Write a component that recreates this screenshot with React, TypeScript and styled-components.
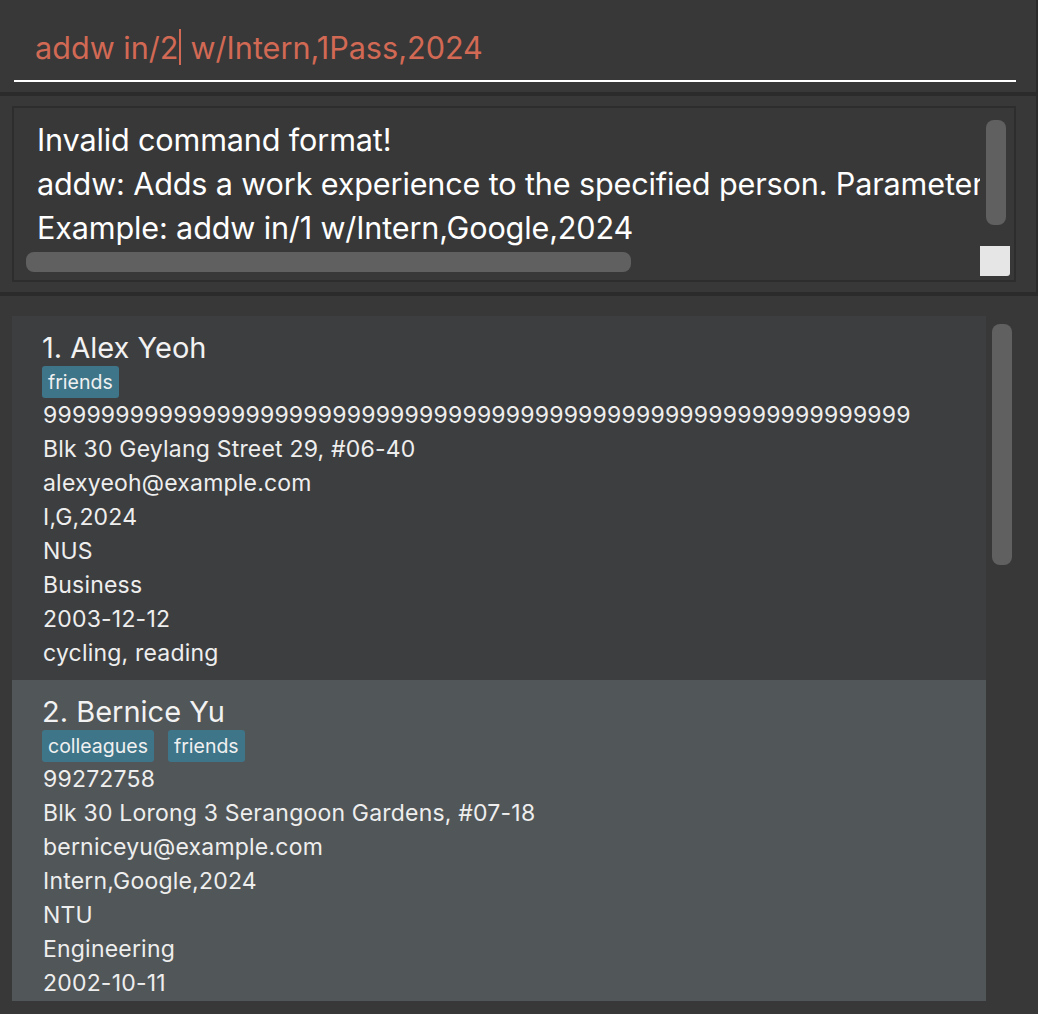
import styled, { createGlobalStyle } from "styled-components";

const GlobalStyle = createGlobalStyle`
    html, body {
        margin: 0;
        padding: 0;
        background: #383838;
        overflow: hidden;
    }

    * {
        box-sizing: border-box;
    }
`;

const Window = styled.div`
    width: 1038px;
    height: 1014px;
    display: flex;
    flex-direction: column;
    gap: 4px;
    background: #2b2b2b;
    font-family: Inter, "Open Sans", sans-serif;
    overflow: hidden;
`;

const CommandPanel = styled.div`
    height: 92px;
    width: 1036px;
    padding: 14px 20px 10px 14px;
    background: #383838;
`;

const CommandField = styled.div`
    height: 68px;
    display: flex;
    align-items: center;
    padding-left: 21px;
    border-bottom: 2px solid #ffffff;
    color: #d26954;
    font-size: 30.6px;
    white-space: pre;
`;

const Caret = styled.span`
    display: inline-block;
    width: 1.5px;
    height: 36px;
    margin: 0 1px;
    background: #d26954;
    vertical-align: middle;
`;

const ResultPanel = styled.div`
    height: 196px;
    width: 1036px;
    padding: 10px 20px 10px 12px;
    background: #383838;
`;

const ResultBox = styled.div`
    height: 100%;
    border: 2px solid #2d2d2d;
    display: grid;
    grid-template-columns: 1fr 30px;
    grid-template-rows: 1fr 30px;
    padding: 0 4px 4px 0;
`;

const ResultText = styled.div`
    padding: 10px 0 0 23px;
    overflow: hidden;
    white-space: nowrap;
    color: #ffffff;
    font-size: 30.6px;
    letter-spacing: -0.15px;
    line-height: 44px;
`;

const VScrollCell = styled.div`
    padding: 12px 4px 0 6px;
`;

const Thumb = styled.div<{ $w?: number; $h?: number }>`
    width: ${(p) => (p.$w ? `${p.$w}px` : "100%")};
    height: ${(p) => (p.$h ? `${p.$h}px` : "100%")};
    background: #606060;
    border-radius: 8px;
`;

const HScrollCell = styled.div`
    padding: 6px 0 0 12px;
`;

const Corner = styled.div`
    background: #e6e6e6;
    border-radius: 0 0 3px 0;
`;

const ListPanel = styled.div`
    flex: 1;
    display: flex;
    gap: 6px;
    padding: 20px 0 13px 12px;
    background: #383838;
`;

const CardList = styled.div`
    width: 974px;
    height: 685px;
    overflow: hidden;
    display: flex;
    flex-direction: column;
`;

const ListScroll = styled.div`
    padding-top: 8px;
    width: 20px;
`;

const Card = styled.div<{ $selected?: boolean }>`
    padding: 14px 0 10px 30px;
    background: ${(p) => (p.$selected ? "#515658" : "#3d3e40")};
    color: #eeeeee;
`;

const Name = styled.div`
    font-size: 29px;
    line-height: 36px;
    color: #f2f2f2;
`;

const Tags = styled.div`
    display: flex;
    gap: 14px;
    height: 32px;
`;

const Tag = styled.span`
    display: inline-flex;
    align-items: center;
    height: 32px;
    padding: 0 6px;
    border-radius: 3px;
    background: #3e7588;
    color: #f0f0f0;
    font-size: 19.5px;
`;

const Detail = styled.div`
    padding-left: 1px;
    font-size: 23px;
    letter-spacing: 0.2px;
    line-height: 34px;
    white-space: nowrap;
`;

type Person = {
    name: string;
    tags: string[];
    details: string[];
};

const people: Person[] = [
    {
        name: "1. Alex Yeoh",
        tags: ["friends"],
        details: [
            "9".repeat(60),
            "Blk 30 Geylang Street 29, #06-40",
            "alexyeoh@example.com",
            "I,G,2024",
            "NUS",
            "Business",
            "2003-12-12",
            "cycling, reading",
        ],
    },
    {
        name: "2. Bernice Yu",
        tags: ["colleagues", "friends"],
        details: [
            "99272758",
            "Blk 30 Lorong 3 Serangoon Gardens, #07-18",
            "berniceyu@example.com",
            "Intern,Google,2024",
            "NTU",
            "Engineering",
            "2002-10-11",
            "gaming, music",
        ],
    },
];

export default function App() {
    return (
        <>
            <GlobalStyle />
            <Window>
                <CommandPanel>
                    <CommandField>
                        addw in/2<Caret /> w/Intern,1Pass,2024
                    </CommandField>
                </CommandPanel>

                <ResultPanel>
                    <ResultBox>
                        <ResultText>
                            <div>Invalid command format!</div>
                            <div>
                                addw: Adds a work experience to the specified person. Parameters: in/INDEX w/ROLE,COMPANY,YEAR
                            </div>
                            <div>Example: addw in/1 w/Intern,Google,2024</div>
                        </ResultText>
                        <VScrollCell>
                            <Thumb $h={105} />
                        </VScrollCell>
                        <HScrollCell>
                            <Thumb $w={605} $h={20} />
                        </HScrollCell>
                        <Corner />
                    </ResultBox>
                </ResultPanel>

                <ListPanel>
                    <CardList>
                        {people.map((p, i) => (
                            <Card key={p.name} $selected={i === 1}>
                                <Name>{p.name}</Name>
                                <Tags>
                                    {p.tags.map((t) => (
                                        <Tag key={t}>{t}</Tag>
                                    ))}
                                </Tags>
                                {p.details.map((d) => (
                                    <Detail key={d}>{d}</Detail>
                                ))}
                            </Card>
                        ))}
                    </CardList>
                    <ListScroll>
                        <Thumb $h={241} />
                    </ListScroll>
                </ListPanel>
            </Window>
        </>
    );
}
